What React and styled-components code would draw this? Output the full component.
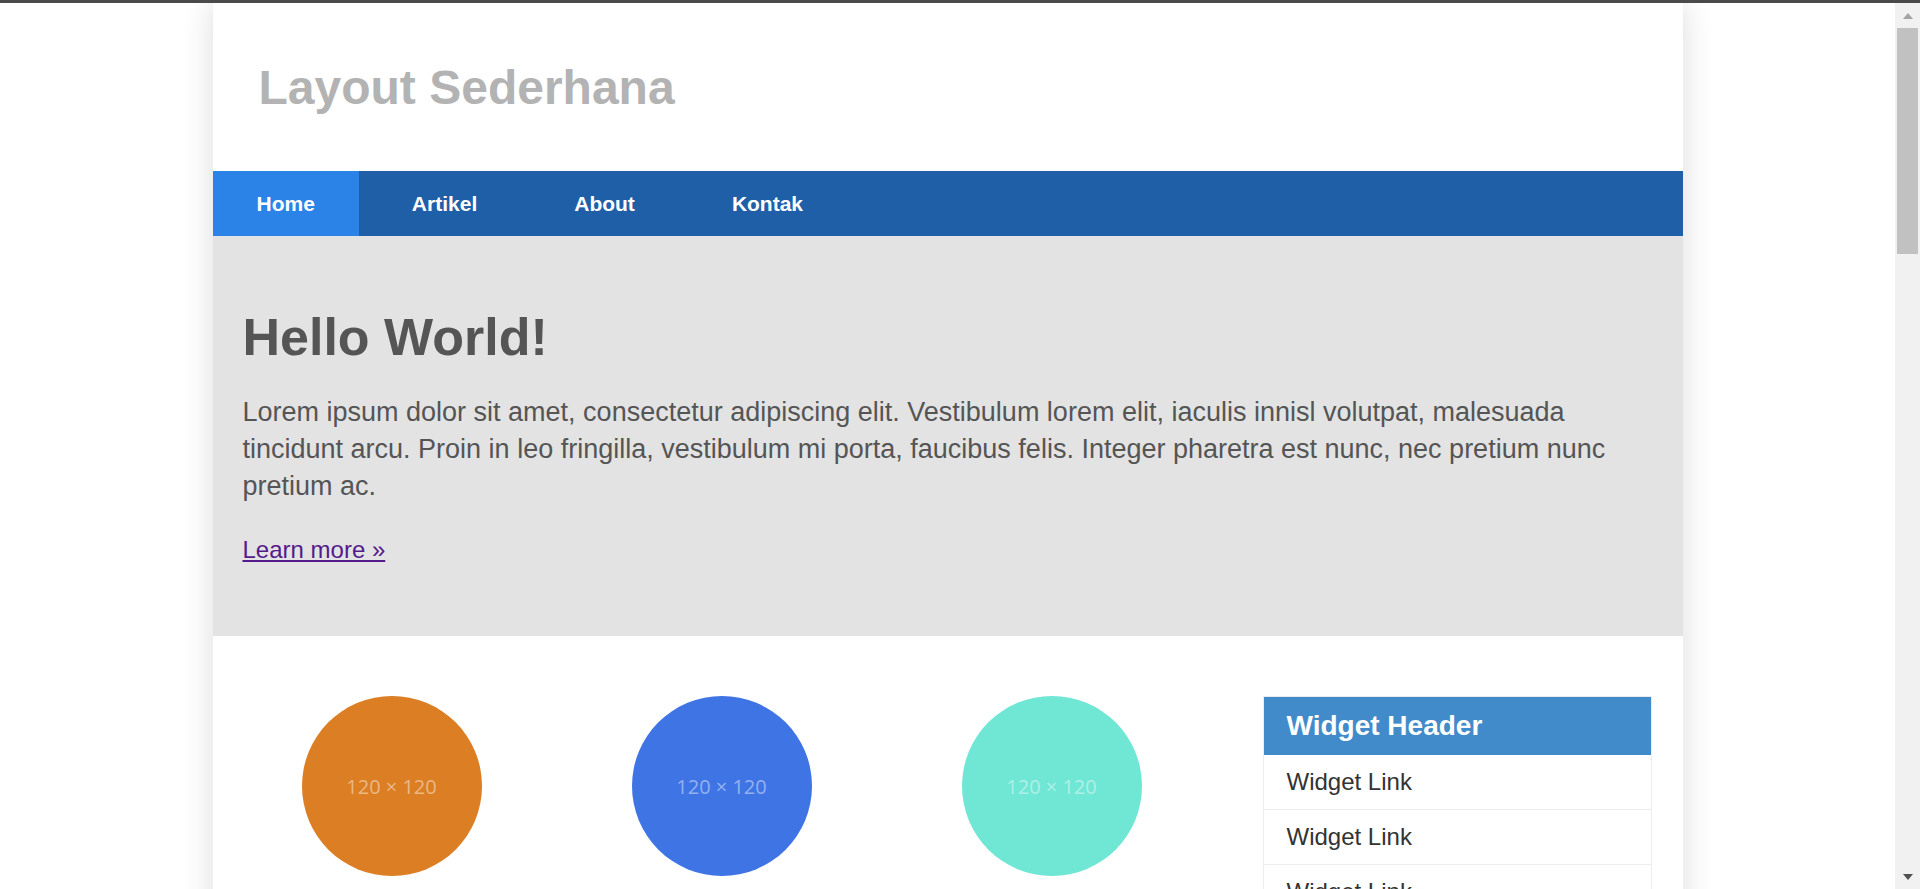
import React from "react";
import styled, { createGlobalStyle, css } from "styled-components";

const GlobalStyle = createGlobalStyle`
  html, body {
    margin: 0;
    padding: 0;
    background: #ffffff;
  }
  body {
    font-family: "Liberation Sans", Arial, sans-serif;
    padding: 3px 25px 0 0;
  }
`;

// browser chrome drawn over the page: the dark top edge and the scroll rail
const TopEdge = styled.div`
  position: fixed;
  top: 0;
  left: 0;
  right: 0;
  height: 3px;
  background: #4a4a4a;
  z-index: 10;
`;

const ScrollRail = styled.div`
  position: fixed;
  top: 3px;
  right: 0;
  bottom: 0;
  width: 25px;
  display: flex;
  flex-direction: column;
  background: #f1f1f1;
  z-index: 10;
`;

const RailButton = styled.div`
  height: 25px;
  flex: none;
  display: flex;
  align-items: center;
  justify-content: center;

  &::after {
    content: "";
    width: 0;
    height: 0;
    border-left: 5.5px solid transparent;
    border-right: 5.5px solid transparent;
    ${(p) =>
      p.$down
        ? css`
            border-top: 6px solid #505050;
          `
        : css`
            border-bottom: 6px solid #a3a3a3;
          `}
  }
`;

const RailTrack = styled.div`
  flex: 1;
`;

const RailThumb = styled.div`
  height: 226px;
  margin: 0 2px;
  background: #c1c1c1;
`;

const Page = styled.div`
  width: 1470px;
  margin: 0 auto;
  background: #ffffff;
  box-shadow: 0 0 30px rgba(0, 0, 0, 0.14);
`;

const Masthead = styled.header`
  height: 168px;
  display: flex;
  align-items: center;
  padding-left: 46px;
`;

const SiteTitle = styled.h1`
  margin: 0;
  font-size: 48px;
  font-weight: bold;
  color: #b3b3b3;
`;

const NavBar = styled.nav`
  height: 65px;
  display: flex;
  gap: 9px;
  background: #1f5fa8;
`;

const NavItem = styled.a`
  display: flex;
  align-items: center;
  padding: 0 44px;
  color: #ffffff;
  font-size: 21px;
  font-weight: bold;
  text-decoration: none;
  ${(p) =>
    p.$active &&
    css`
      background: #2b82e7;
    `}
`;

const Hero = styled.section`
  background: #e3e3e3;
  padding: 70px 30px 68px;
  color: #555555;
`;

const HeroTitle = styled.h1`
  margin: 0;
  font-size: 52px;
  line-height: 1.2;
  font-weight: bold;
`;

const HeroText = styled.p`
  margin: 26px 0 0;
  font-size: 27px;
  line-height: 37px;
`;

const HeroLinkLine = styled.p`
  margin: 27px 0 0;
  font-size: 24px;
  line-height: 36px;
`;

const LearnMore = styled.a`
  color: #551a8b;
  text-decoration: underline;
`;

const Content = styled.section`
  display: flex;
  align-items: flex-start;
  padding: 60px 31px 80px 30px;
`;

const MainColumn = styled.div`
  width: 958px;
`;

const FeatureGrid = styled.div`
  display: grid;
  grid-template-columns: repeat(3, 298px);
  column-gap: 32px;
`;

const Feature = styled.div`
  display: flex;
  flex-direction: column;
  align-items: center;
  text-align: center;
  color: #555555;
`;

const Circle = styled.div`
  width: 180px;
  height: 180px;
  border-radius: 50%;
  background: ${(p) => p.$color};
  display: flex;
  align-items: center;
  justify-content: center;
  font-family: "Open Sans", "Liberation Sans", sans-serif;
  font-size: 20px;
  color: rgba(255, 255, 255, 0.45);
`;

const FeatureTitle = styled.h2`
  margin: 30px 0 12px;
  font-size: 30px;
`;

const FeatureText = styled.p`
  margin: 0 0 20px;
  font-size: 20px;
  line-height: 30px;
`;

const FeatureButton = styled.a`
  display: inline-block;
  padding: 10px 22px;
  background: #1f5fa8;
  color: #ffffff;
  font-size: 18px;
  text-decoration: none;
`;

const Article = styled.article`
  margin-top: 70px;
  color: #555555;
`;

const ArticleTitle = styled.h2`
  margin: 0 0 16px;
  font-size: 36px;
`;

const ArticleText = styled.p`
  margin: 0 0 18px;
  font-size: 22px;
  line-height: 34px;
`;

const Sidebar = styled.aside`
  width: 389px;
  margin-left: auto;
  display: flex;
  flex-direction: column;
  gap: 40px;
`;

const Widget = styled.div`
  border: 1px solid #ececec;
`;

const WidgetHeader = styled.h3`
  margin: 0;
  padding: 8px 23px;
  font-size: 28px;
  line-height: 42px;
  font-weight: bold;
  color: #ffffff;
  background: #428bca;
`;

const WidgetLink = styled.a`
  display: block;
  padding: 9px 23px;
  font-size: 24px;
  line-height: 36px;
  color: #333333;
  text-decoration: none;
  border-top: ${(p) => (p.$first ? "none" : "1px solid #ececec")};
`;

const Footer = styled.footer`
  padding: 40px 30px;
  background: #1f5fa8;
  color: #ffffff;
  font-size: 20px;
`;

const navItems = ["Home", "Artikel", "About", "Kontak"];

const features = [
  { color: "#db7e24", title: "Heading" },
  { color: "#3f74e4", title: "Heading" },
  { color: "#70e6d5", title: "Heading" },
];

const lorem =
  "Donec id elit non mi porta gravida at eget metus. Fusce dapibus, tellus ac cursus commodo, tortor mauris condimentum nibh, ut fermentum massa justo sit amet risus.";

const articleText =
  "Lorem ipsum dolor sit amet, consectetur adipiscing elit. Vestibulum lorem elit, iaculis innisl volutpat, malesuada tincidunt arcu. Proin in leo fringilla, vestibulum mi porta, faucibus felis. Integer pharetra est nunc, nec pretium nunc pretium ac.";

const articles = ["Artikel Pertama", "Artikel Kedua", "Artikel Ketiga"];

const widgets = [
  { title: "Widget Header", links: 5 },
  { title: "Widget Header", links: 5 },
];

const App = () => {
  return (
    <>
      <GlobalStyle />
      <TopEdge />
      <ScrollRail>
        <RailButton />
        <RailTrack>
          <RailThumb />
        </RailTrack>
        <RailButton $down />
      </ScrollRail>
      <Page>
        <Masthead>
          <SiteTitle>Layout Sederhana</SiteTitle>
        </Masthead>
        <NavBar>
          {navItems.map((item, i) => (
            <NavItem key={item} href="#" $active={i === 0}>
              {item}
            </NavItem>
          ))}
        </NavBar>
        <Hero>
          <HeroTitle>Hello World!</HeroTitle>
          <HeroText>
            Lorem ipsum dolor sit amet, consectetur adipiscing elit. Vestibulum
            lorem elit, iaculis innisl volutpat, malesuada tincidunt arcu. Proin
            in leo fringilla, vestibulum mi porta, faucibus felis. Integer
            pharetra est nunc, nec pretium nunc pretium ac.
          </HeroText>
          <HeroLinkLine>
            <LearnMore href="#">Learn more »</LearnMore>
          </HeroLinkLine>
        </Hero>
        <Content>
          <MainColumn>
            <FeatureGrid>
              {features.map((f) => (
                <Feature key={f.color}>
                  <Circle $color={f.color}>120 × 120</Circle>
                  <FeatureTitle>{f.title}</FeatureTitle>
                  <FeatureText>{lorem}</FeatureText>
                  <FeatureButton href="#">View details »</FeatureButton>
                </Feature>
              ))}
            </FeatureGrid>
            {articles.map((a) => (
              <Article key={a}>
                <ArticleTitle>{a}</ArticleTitle>
                <ArticleText>{articleText}</ArticleText>
                <ArticleText>{articleText}</ArticleText>
              </Article>
            ))}
          </MainColumn>
          <Sidebar>
            {widgets.map((w, wi) => (
              <Widget key={wi}>
                <WidgetHeader>{w.title}</WidgetHeader>
                {Array.from({ length: w.links }).map((_, i) => (
                  <WidgetLink key={i} href="#" $first={i === 0}>
                    Widget Link
                  </WidgetLink>
                ))}
              </Widget>
            ))}
          </Sidebar>
        </Content>
        <Footer>© 2024 Layout Sederhana</Footer>
      </Page>
    </>
  );
};

export default App;
